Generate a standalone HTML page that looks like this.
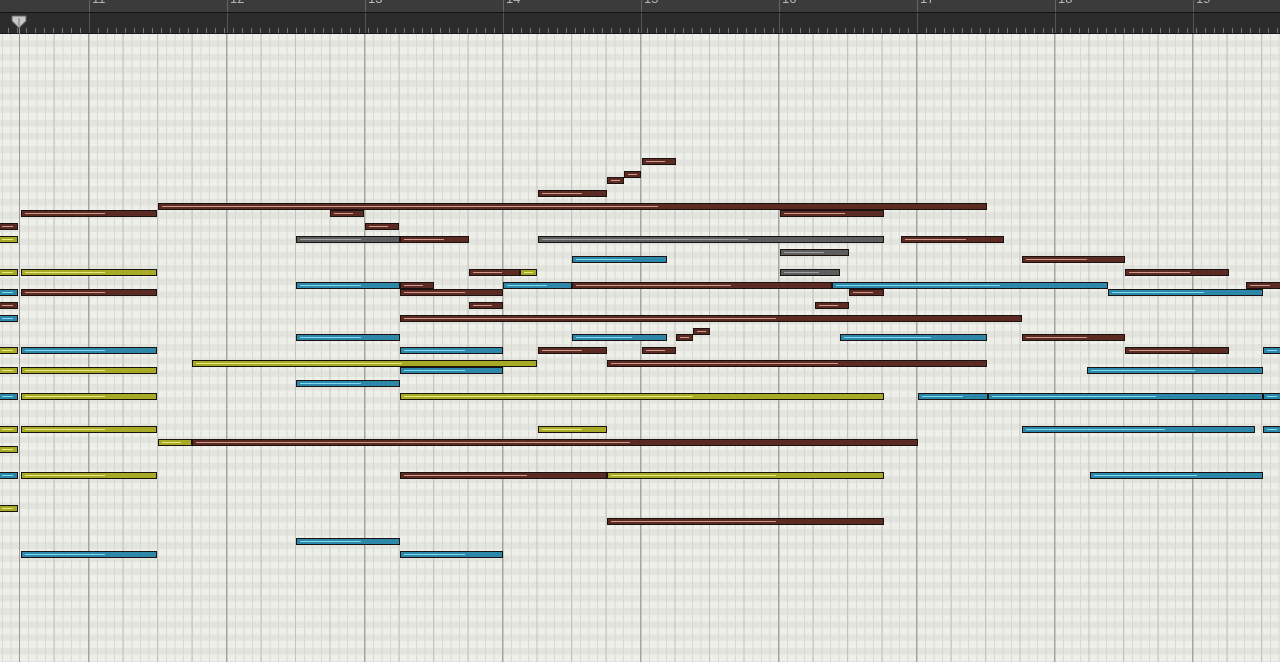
<!DOCTYPE html>
<html><head><meta charset="utf-8"><style>
html,body{margin:0;padding:0;width:1280px;height:662px;overflow:hidden;background:#ecece7;font-family:"Liberation Sans",sans-serif}
#topbar{position:absolute;left:0;top:0;width:1280px;height:12px;background:#3b3b3b;border-bottom:1px solid #151515;overflow:hidden}
#rul{position:absolute;left:0;top:13px;width:1280px;height:20px;background:#2c2c2c;
background-image:repeating-linear-gradient(90deg,transparent 0 8px,#777 8px 9px);background-size:100% 5px;background-repeat:repeat-x;background-position:0 15px;border-bottom:1px solid #1a1a1a}
#grid{position:absolute;left:0;top:34px;width:1280px;height:628px;
background-image:
repeating-linear-gradient(90deg,transparent 0 88px,#a4a4a0 88px 89.5px,transparent 89.5px 138px),
repeating-linear-gradient(90deg,transparent 0 19px,#c2c2be 19px 20px,transparent 20px 34.5px),
repeating-linear-gradient(90deg,transparent 0 2px,#d9d9d4 2px 3px,transparent 3px 8.625px),
repeating-linear-gradient(180deg,#efefea 0 6.6px,#e4e4df 6.6px 13.2px);}
.n{position:absolute;height:5px;border:1px solid #1b1210;box-sizing:content-box}
.n i{position:absolute;left:3px;top:2px;height:1px}
.b{background:#5b2a22}.b i{background:#d29a8e}
.t{background:#2d87a8}.t i{background:#7fd8f4}
.o{background:#a7aa25}.o i{background:#e6e884}
.g{background:#5d5d5d}.g i{background:#a0a0a0}
.num{position:absolute;top:-8px;color:#b5b5b5;font-size:13px;line-height:13px}
.bl{position:absolute;top:0;width:1px;height:12px;background:#666}
</style></head><body>
<div id="topbar"></div>
<div id="rul"></div>
<div id="grid"></div>
<div id="notes"></div>
<div style="position:absolute;left:19px;top:20px;width:1px;height:642px;background:#9a9a98"></div>
<svg style="position:absolute;left:11px;top:15px" width="16" height="14"><path d="M1 1H15V6L8 13L1 6Z" fill="#c8c8c8" stroke="#666"/><path d="M8 3V11" stroke="#777"/></svg>
<script>
(function(){
var tb=document.getElementById('topbar'),rul=document.getElementById('rul');
var nums=[11,12,13,14,15,16,17,18,19];var a1='',a2='';
for(var k=0;k<9;k++){var x=89+138*k;
a1+='<div class="bl" style="left:'+x+'px"></div><div class="num" style="left:'+(x+3)+'px">'+nums[k]+'</div>';
a2+='<div style="position:absolute;left:'+x+'px;top:0;width:1px;height:20px;background:#555"></div>';}
tb.innerHTML=a1;rul.innerHTML=a2;
var N=[
[642,676,158,'b'],[624,641,171,'b'],[607,624,177,'b'],[538,607,190,'b'],[158,987,203,'b'],
[21,157,210,'b'],[330,364,210,'b'],[780,884,210,'b'],
[-2,18,223,'b'],[365,399,223,'b'],
[-2,18,236,'o'],[296,400,236,'g'],[400,469,236,'b'],[538,884,236,'g'],[901,1004,236,'b'],
[780,849,249,'g'],[572,667,256,'t'],[1022,1125,256,'b'],
[-2,18,269,'o'],[21,157,269,'o'],[469,520,269,'b'],[520,537,269,'o'],[780,840,269,'g'],[1125,1229,269,'b'],
[296,400,282,'t'],[400,434,282,'b'],[503,572,282,'t'],[572,832,282,'b'],[832,1108,282,'t'],[1246,1282,282,'b'],
[-2,18,289,'t'],[21,157,289,'b'],[400,503,289,'b'],[849,884,289,'b'],[1108,1263,289,'t'],
[-2,18,302,'b'],[469,503,302,'b'],[815,849,302,'b'],
[-2,18,315,'t'],[400,1022,315,'b'],
[693,710,328,'b'],
[296,400,334,'t'],[572,667,334,'t'],[676,693,334,'b'],[840,987,334,'t'],[1022,1125,334,'b'],
[-2,18,347,'o'],[21,157,347,'t'],[400,503,347,'t'],[538,607,347,'b'],[642,676,347,'b'],[1125,1229,347,'b'],[1263,1282,347,'t'],
[192,537,360,'o'],[607,987,360,'b'],
[-2,18,367,'o'],[21,157,367,'o'],[400,503,367,'t'],[1087,1263,367,'t'],
[296,400,380,'t'],
[-2,18,393,'t'],[21,157,393,'o'],[400,884,393,'o'],[918,988,393,'t'],[988,1263,393,'t'],[1263,1282,393,'t'],
[-2,18,426,'o'],[21,157,426,'o'],[538,607,426,'o'],[1022,1255,426,'t'],[1263,1282,426,'t'],
[158,192,439,'o'],[192,918,439,'b'],
[-2,18,446,'o'],
[-2,18,472,'t'],[21,157,472,'o'],[400,607,472,'b'],[607,884,472,'o'],[1090,1263,472,'t'],
[-2,18,505,'o'],[607,884,518,'b'],[296,400,538,'t'],[21,157,551,'t'],[400,503,551,'t']];
var h='';N.forEach(function(a){var w=a[1]-a[0]-2;h+='<div class="n '+a[3]+'" style="left:'+a[0]+'px;top:'+a[2]+'px;width:'+w+'px"><i style="width:'+Math.max(4,Math.round(w*0.6))+'px"></i></div>';});
document.getElementById('notes').innerHTML=h;
})();
</script>
</body></html>
